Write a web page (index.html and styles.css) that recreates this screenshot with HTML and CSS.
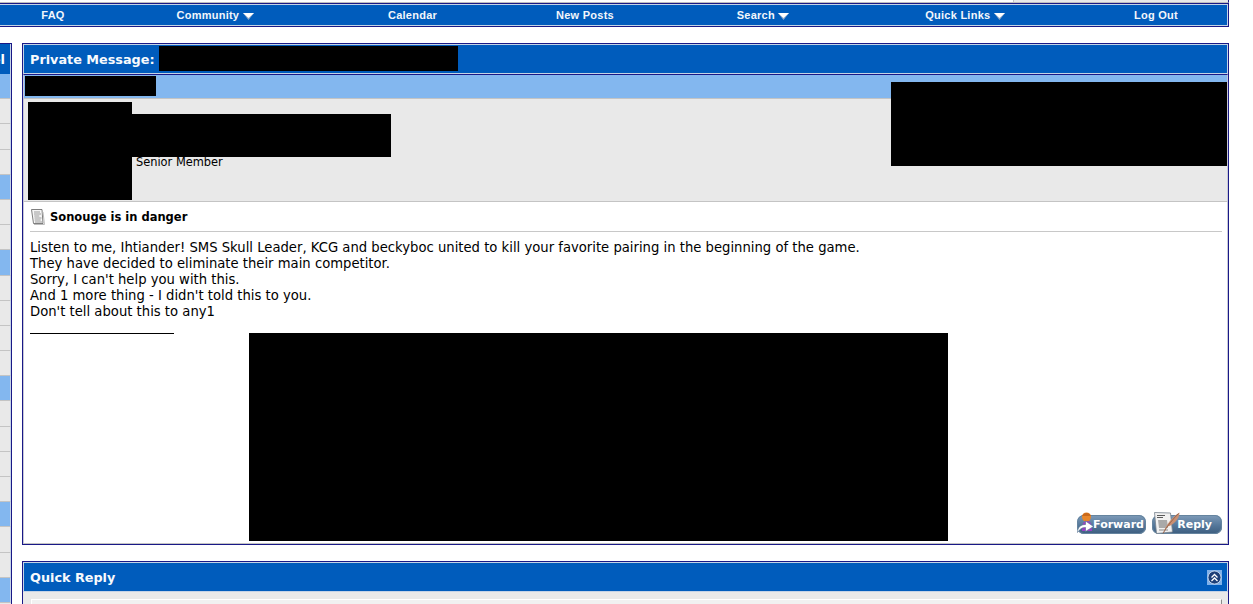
FILE: index.html
```html
<!DOCTYPE html>
<html lang="en">
<head>
  <meta charset="UTF-8">
  <title>Private Message</title>
  <link rel="stylesheet" href="styles.css">
</head>
<body>
  <div class="top-strip">
    <div class="strip-left"></div>
    <div class="strip-right"></div>
  </div>

  <div class="navbar">
    <a class="nav-item">FAQ</a>
    <a class="nav-item">Community <svg class="nav-arrow" width="11" height="7" viewBox="0 0 11 7"><path d="M0 0h11L5.500 7z" fill="#8fa9c9"/><path d="M0 0h11L5.500 5z" fill="#fff"/></svg></a>
    <a class="nav-item">Calendar</a>
    <a class="nav-item">New Posts</a>
    <a class="nav-item">Search <svg class="nav-arrow" width="11" height="7" viewBox="0 0 11 7"><path d="M0 0h11L5.500 7z" fill="#8fa9c9"/><path d="M0 0h11L5.500 5z" fill="#fff"/></svg></a>
    <a class="nav-item">Quick Links <svg class="nav-arrow" width="11" height="7" viewBox="0 0 11 7"><path d="M0 0h11L5.500 7z" fill="#8fa9c9"/><path d="M0 0h11L5.500 5z" fill="#fff"/></svg></a>
    <a class="nav-item">Log Out</a>
  </div>

  <div class="layout">
    <!-- sidebar is cut off by the left edge of the window -->
    <div class="sidebar">
      <div class="side-head">Control Panel</div>
      <div class="side-row side-hi"></div>
      <div class="side-row"></div>
      <div class="side-row"></div>
      <div class="side-row"></div>
      <div class="side-row side-hi"></div>
      <div class="side-row"></div>
      <div class="side-row"></div>
      <div class="side-row side-hi"></div>
      <div class="side-row"></div>
      <div class="side-row"></div>
      <div class="side-row"></div>
      <div class="side-row"></div>
      <div class="side-row side-hi"></div>
      <div class="side-row"></div>
      <div class="side-row"></div>
      <div class="side-row"></div>
      <div class="side-row"></div>
      <div class="side-row side-hi"></div>
      <div class="side-row"></div>
      <div class="side-row"></div>
      <div class="side-row side-hi"></div>
    </div>

    <div class="content">
      <div class="panel">
        <div class="panel-head">
          <span>Private Message:</span>
          <span class="redact title-redact"></span>
        </div>
        <div class="post-date">
          <span class="redact date-redact"></span>
        </div>
        <div class="post-user">
          <div class="redact avatar-redact"></div>
          <div class="user-info">
            <div class="redact name-redact"></div>
            <div class="user-title">Senior Member</div>
          </div>
          <div class="redact extra-redact"></div>
        </div>
        <div class="post-body">
          <div class="post-title">
            <svg class="post-icon" width="14" height="16" viewBox="0 0 14 16">
              <path d="M.5 .5h10.500l1 14H2.500z" fill="#f6f6f6" stroke="#5f5f5f" stroke-width=".8"/>
              <path d="M3 3h6M3 5h7M3.300 7h5M3.500 9h7M3.700 11h6M4 13h7" stroke="#9a9a9a"/>
              <path d="M12 3l1.500 12.500H3" fill="none" stroke="#bdbdbd"/>
            </svg>
            <strong>Sonouge is in danger</strong>
          </div>
          <div class="post-text">
            Listen to me, Ihtiander! SMS Skull Leader, KCG and beckyboc united to kill your favorite pairing in the beginning of the game.<br>
            They have decided to eliminate their main competitor.<br>
            Sorry, I can't help you with this.<br>
            And 1 more thing - I didn't told this to you.<br>
            Don't tell about this to any1
          </div>
          <div class="signature">
            <div class="sig-rule"></div>
            <div class="redact sig-redact"></div>
            <div class="post-buttons">
              <a class="post-btn btn-forward">
                <svg class="btn-icon" width="18" height="22" viewBox="0 0 18 22">
                  <circle cx="9.500" cy="5" r="4.500" fill="#e8862a"/>
                  <path d="M5 4c1-4 8-4 9 0z" fill="#c9681a"/>
                  <path d="M5 19c0-6 1-10 5-10s5 4 5 10z" fill="#9a3fc4"/>
                  <path d="M.5 20.500c0-5 3-8 8-8V9l8 5.500-8 5v-4c-4 0-6 2-8 5z" fill="#fff" stroke="#4a6a8c" stroke-width=".6"/>
                </svg>
                <span>Forward</span>
              </a>
              <a class="post-btn btn-reply">
                <svg class="btn-icon" width="28" height="22" viewBox="0 0 28 22">
                  <path d="M2.500 .5l16 .5 2 19-16 1.500z" fill="#f1f1f1" stroke="#75808c" stroke-width=".8"/>
                  <path d="M5 3.500h8M5 5.500h6" stroke="#5b5b5b"/>
                  <path d="M6 8h9l1 8H7z" fill="#a9a9a9"/>
                  <path d="M7 18h9" stroke="#8a8a8a"/>
                  <path d="M11 21.500C14 13 20 5 27.500 .5c0 7-7 13-12 14z" fill="#c98f72"/>
                  <path d="M11 21.500C15 14 21 7 26.500 1.500" fill="none" stroke="#8b5a43" stroke-width=".8"/>
                </svg>
                <span>Reply</span>
              </a>
            </div>
          </div>
        </div>
      </div>

      <div class="panel quick-reply">
        <div class="panel-head qr-head">
          <span>Quick Reply</span>
          <span class="collapse-btn">
            <svg width="15" height="15" viewBox="0 0 15 15">
              <rect width="15" height="15" fill="#7fb1ea"/>
              <circle cx="7.500" cy="7.500" r="6.500" fill="#1c3f78" stroke="#d5e2f2" stroke-width=".8"/>
              <path d="M4.500 7.500l3-3 3 3M4.500 11l3-3 3 3" fill="none" stroke="#fff" stroke-width="1.300"/>
            </svg>
          </span>
        </div>
        <div class="qr-body">
          <div class="qr-box"></div>
        </div>
      </div>
    </div>
  </div>
</body>
</html>
```

FILE: styles.css
```css
html, body {
  height: 604px;
  overflow: hidden;
}

body {
  margin: 0;
  background-color: #fff;
  color: #000;
  font-family: "DejaVu Sans", Verdana, sans-serif;
  font-size: 13px;
}

a {
  color: inherit;
  text-decoration: none;
}

.redact {
  background-color: #000;
}

/* bottom of the block above the nav */
.top-strip {
  display: flex;
  width: 1229px;
  height: 3px;
  box-sizing: border-box;
  border-bottom: 1px solid #bdbdbd;
  border-right: 1px solid #191987;
}

.strip-left {
  width: 1013px;
}

.strip-right {
  flex: 1;
  background-color: #e9e9e9;
  border-left: 1px solid #c4c4c4;
}

.navbar {
  display: grid;
  grid-template-columns: 76px 248px 147px 198px 158px 246px 136px;
  align-items: center;
  width: 1229px;
  height: 24px;
  box-sizing: border-box;
  padding-left: 15px;
  background-color: #005cbc;
  border: 1px solid #191987;
  border-left: 0;
  box-shadow: inset 0 1px 0 #c5d3e6, inset -1px -1px 0 #c5d3e6;
}

.nav-item {
  text-align: center;
  color: #f2f6fb;
  font-family: "Liberation Sans", Arial, sans-serif;
  font-size: 11px;
  font-weight: bold;
  letter-spacing: .25px;
}

.nav-arrow {
  vertical-align: -0.5px;
}

.layout {
  display: flex;
  gap: 10px;
  margin-top: 16px;
  width: 1229px;
}

.sidebar {
  width: 12px;
  flex: none;
  box-sizing: border-box;
  overflow: hidden;
  background-color: #e9e9e9;
  border: 1px solid #191987;
  border-left: 0;
  border-bottom: 0;
  height: 561px;
}

.side-head {
  display: flex;
  justify-content: flex-end;
  align-items: center;
  height: 30px;
  padding-right: 5px;
  white-space: nowrap;
  background-color: #005cbc;
  color: #fff;
  font-size: 13px;
  font-weight: bold;
  border-right: 1px solid #c5d3e6;
}

.side-row {
  height: 25.2px;
  box-sizing: border-box;
  border-right: 1px solid #c5d3e6;
  border-bottom: 1px solid #c4c4c4;
}

.side-hi {
  background-color: #83b7ef;
}

.content {
  flex: 1;
  min-width: 0;
}

.panel {
  display: flex;
  flex-direction: column;
  height: 502px;
  box-sizing: border-box;
  border: 1px solid #191987;
}

.panel-head {
  display: flex;
  align-items: center;
  flex: none;
  height: 30px;
  box-sizing: border-box;
  padding-left: 6px;
  background-color: #005cbc;
  border: 1px solid #c5d3e6;
  color: #f7fafd;
  font-size: 12.8px;
  font-weight: bold;
}

.title-redact {
  display: block;
  align-self: flex-start;
  width: 299px;
  height: 25px;
  margin: 1px 0 0 4px;
}

.post-date {
  flex: none;
  height: 25px;
  padding: 1px 0 0 1px;
  box-sizing: border-box;
  background-color: #83b7ef;
  border: 1px solid #c8c8d8;
  border-top-color: #191987;
  border-bottom-color: #c4c4c4;
}

.date-redact {
  display: block;
  width: 131px;
  height: 20px;
}

.post-user {
  position: relative;
  display: flex;
  flex: none;
  height: 103px;
  box-sizing: border-box;
  padding: 3px 0 0 4px;
  background-color: #e9e9e9;
  border: 1px solid #c8c8d8;
  border-top: 0;
  border-bottom-color: #c4c4c4;
}

.avatar-redact {
  width: 104px;
  height: 98px;
  flex: none;
}

.name-redact {
  width: 259px;
  height: 43px;
  margin-top: 12px;
}

.user-title {
  margin-left: 4px;
  font-size: 11.4px;
  line-height: 11px;
}

/* redaction bar overlaps the date row and the user row */
.extra-redact {
  position: absolute;
  top: -17px;
  right: 0;
  width: 336px;
  height: 84px;
}

.post-body {
  flex: 1;
  min-height: 0;
  padding: 0 5px 0 6px;
  border: 1px solid #c8c8d8;
  border-top: 0;
  border-bottom-color: #c4c4c4;
}

.post-title {
  display: flex;
  align-items: center;
  gap: 5px;
  height: 29px;
  border-bottom: 1px solid #c8c8c8;
  font-size: 11.5px;
}

.post-icon {
  margin-left: 1px;
}

.post-text {
  margin-top: 8px;
  line-height: 16px;
  font-size: 13.2px;
}

.signature {
  position: relative;
  display: flex;
  align-items: flex-end;
  margin-top: 13px;
}

.sig-rule {
  position: absolute;
  left: 0;
  top: 0;
  width: 144px;
  height: 1px;
  background-color: #000;
}

.sig-redact {
  width: 699px;
  height: 208px;
  margin-left: 219px;
}

.post-buttons {
  display: flex;
  gap: 6px;
  margin-left: auto;
  margin-bottom: 7px;
}

.post-btn {
  position: relative;
  display: flex;
  align-items: center;
  justify-content: flex-end;
  height: 19px;
  width: 69px;
  box-sizing: border-box;
  padding-right: 2px;
  border-radius: 7px;
  background: linear-gradient(#7f9cb9, #54779a 55%, #3c5d7e);
  box-shadow: inset 0 0 0 1px #65849f;
  color: #fff;
  font-size: 11px;
  font-weight: bold;
}

.btn-reply {
  width: 70px;
  padding-right: 10px;
}

/* icons stick out over the top of the button */
.btn-icon {
  position: absolute;
  left: 0;
  bottom: 0;
}

.quick-reply {
  margin-top: 16px;
  overflow: hidden;
}

.qr-head {
  justify-content: space-between;
  padding-right: 5px;
}

.collapse-btn {
  display: flex;
}

.qr-body {
  height: 100px;
  padding: 7px 6px 0 8px;
  background-color: #e9e9e9;
}

.qr-box {
  height: 80px;
  background-color: #f1f1f1;
  border: 1px solid #fff;
  border-right-color: #8a8a8a;
}
```
